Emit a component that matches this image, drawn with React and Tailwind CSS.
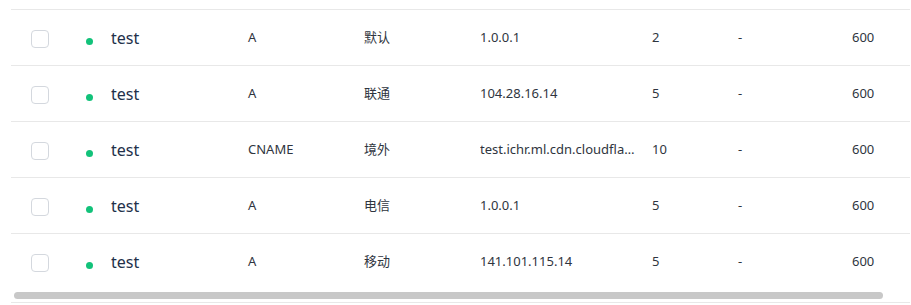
import React from 'react';

const records = [
  { name: 'test', type: 'A', line: '默认', value: '1.0.0.1', mx: '2', weight: '-', ttl: '600' },
  { name: 'test', type: 'A', line: '联通', value: '104.28.16.14', mx: '5', weight: '-', ttl: '600' },
  { name: 'test', type: 'CNAME', line: '境外', value: 'test.ichr.ml.cdn.cloudflare.net', mx: '10', weight: '-', ttl: '600' },
  { name: 'test', type: 'A', line: '电信', value: '1.0.0.1', mx: '5', weight: '-', ttl: '600' },
  { name: 'test', type: 'A', line: '移动', value: '141.101.115.14', mx: '5', weight: '-', ttl: '600' },
];

const cols = 'grid grid-cols-[75px_162px_116px_116px_172px_86px_114px_1fr]';

const App = () => {
  return (
    <div
      className="w-[911px] h-[305px] bg-white pt-[9px] pl-[11px] pr-[1px] text-[13px] text-[#2f3540]"
      style={{ fontFamily: '"Noto Sans", "Noto Sans CJK SC", sans-serif' }}
    >
      <div className="border-b border-[#e8e8e8]">
        {records.map((r, i) => (
          <div key={i} className={`${cols} h-[56px] items-center border-t border-[#e8e8e8]`}>
            <div className="pl-[20px] pt-[3px]">
              <div className="w-[18px] h-[18px] rounded-[4px] border border-[#d4d8de] bg-white" />
            </div>
            <div className="flex items-center">
              <span className="w-[7px] h-[7px] rounded-full bg-[#12c27a] mt-[7px]" />
              <span className="ml-[18px] text-[16px] text-[#22304a]">{r.name}</span>
            </div>
            <div>{r.type}</div>
            <div>{r.line}</div>
            <div className="pr-[14px] truncate">{r.value}</div>
            <div>{r.mx}</div>
            <div>{r.weight}</div>
            <div>{r.ttl}</div>
          </div>
        ))}
        <div className="h-[13px] pt-[3px] pl-[3px]">
          <div className="w-[869px] h-[7px] rounded-full bg-[#c8c8c8]" />
        </div>
      </div>
    </div>
  );
};

export default App;
